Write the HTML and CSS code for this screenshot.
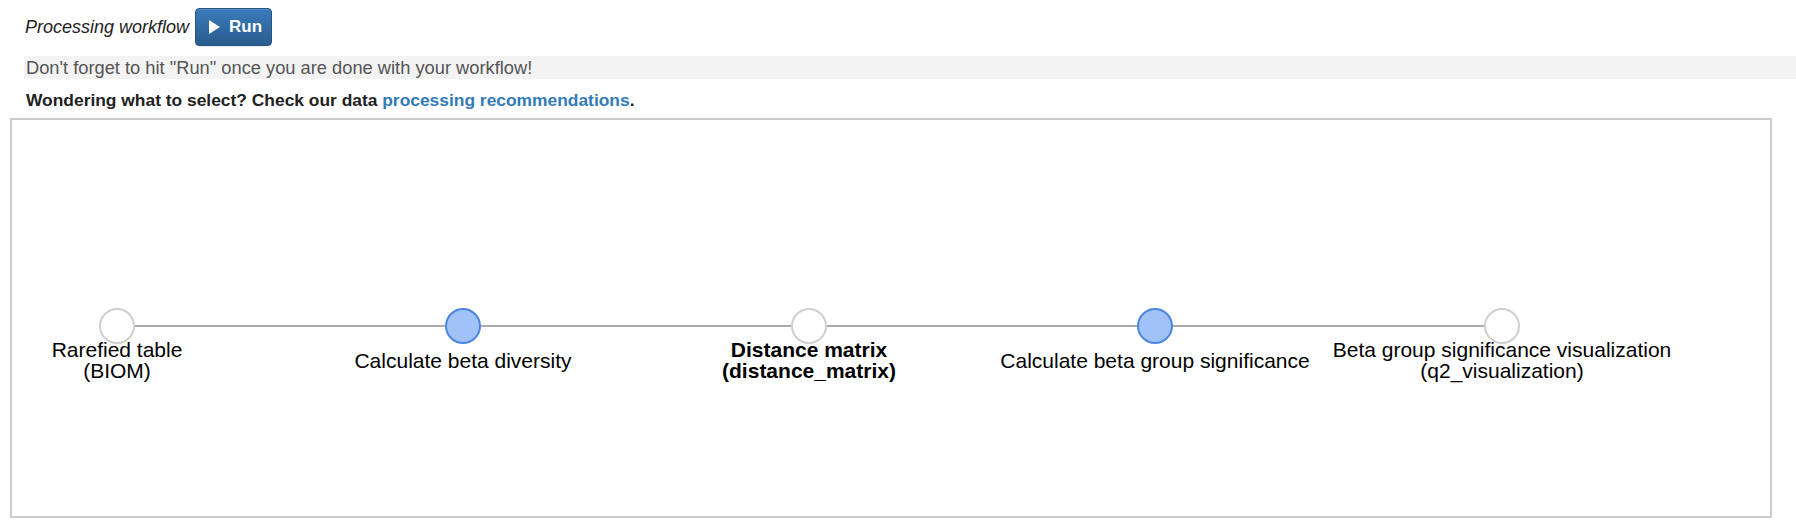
FILE: index.html
```html
<!DOCTYPE html>
<html>
<head>
<meta charset="utf-8">
<link rel="stylesheet" href="styles.css">
</head>
<body>
<div class="page">
  <div class="title-row">
    <span class="title">Processing workflow</span>
    <button class="btn-run" type="button"><svg class="play" width="11" height="14" viewBox="0 0 11 14"><polygon points="0,0 11,7 0,14" fill="#fff"/></svg><span>Run</span></button>
  </div>
  <div class="notice">Don't forget to hit "Run" once you are done with your workflow!</div>
  <p class="hint">Wondering what to select? Check our data <a href="#">processing recommendations</a>.</p>
  <div class="graph-box">
    <svg class="graph" width="1758" height="396" viewBox="0 0 1758 396">
      <line x1="105" y1="206" x2="1490" y2="206" stroke="#8f8f8f" stroke-width="1.5"/>
      <circle cx="105" cy="206" r="17" class="n-empty"/>
      <circle cx="451" cy="206" r="17" class="n-job"/>
      <circle cx="797" cy="206" r="17" class="n-empty"/>
      <circle cx="1143" cy="206" r="17" class="n-job"/>
      <circle cx="1490" cy="206" r="17" class="n-empty"/>
      <text x="105" y="237" class="lbl">Rarefied table</text>
      <text x="105" y="257.5" class="lbl">(BIOM)</text>
      <text x="451" y="247.5" class="lbl">Calculate beta diversity</text>
      <text x="797" y="237" class="lbl bold">Distance matrix</text>
      <text x="797" y="257.5" class="lbl bold">(distance_matrix)</text>
      <text x="1143" y="247.5" class="lbl">Calculate beta group significance</text>
      <text x="1490" y="237" class="lbl">Beta group significance visualization</text>
      <text x="1490" y="257.5" class="lbl">(q2_visualization)</text>
    </svg>
  </div>
</div>
</body>
</html>
```
FILE: styles.css
```css
html, body {
  margin: 0;
  padding: 0;
  background: #fff;
}
body {
  font-family: "Liberation Sans", Arial, Helvetica, sans-serif;
  font-size: 16px;
  color: #333;
}
.page {
  padding: 8px 0 0 10px;
}
.title-row {
  display: flex;
  align-items: center;
  gap: 6px;
  margin-left: 15px;
  height: 38px;
}
.title {
  font-style: italic;
  font-size: 18px;
  color: #222;
}
.btn-run {
  display: flex;
  align-items: center;
  gap: 9px;
  height: 38px;
  padding: 0 9px 0 13px;
  border: 1px solid #245580;
  border-radius: 4px;
  background: linear-gradient(to bottom, #3a7abb 0%, #2a5d8e 100%);
  color: #fff;
  font-family: "Liberation Sans", Arial, sans-serif;
  font-size: 17px;
  font-weight: bold;
  box-shadow: inset 0 1px 0 rgba(255,255,255,.15), 0 1px 1px rgba(0,0,0,.075);
}
.play {
  display: block;
}
.notice {
  margin: 10px 0 0 14px;
  height: 23px;
  line-height: 23px;
  background: #f3f3f3;
  color: #555;
  font-size: 18.3px;
  padding-left: 2px;
}
.hint {
  margin: 10px 0 7px 16px;
  line-height: 22px;
  font-size: 17.4px;
  font-weight: bold;
  color: #222;
}
.hint a {
  color: #337ab7;
  text-decoration: none;
}
.graph-box {
  box-sizing: border-box;
  width: 1762px;
  height: 400px;
  border: 2px solid #cccccc;
}
.graph {
  display: block;
}
.n-empty {
  fill: #ffffff;
  stroke: #cfcfcf;
  stroke-width: 2;
}
.n-job {
  fill: #a0c2f6;
  stroke: #4c86e2;
  stroke-width: 2;
}
.lbl {
  font-family: "Liberation Sans", Arial, sans-serif;
  font-size: 21px;
  fill: #000;
  text-anchor: middle;
}
.lbl.bold {
  font-weight: bold;
}
```
